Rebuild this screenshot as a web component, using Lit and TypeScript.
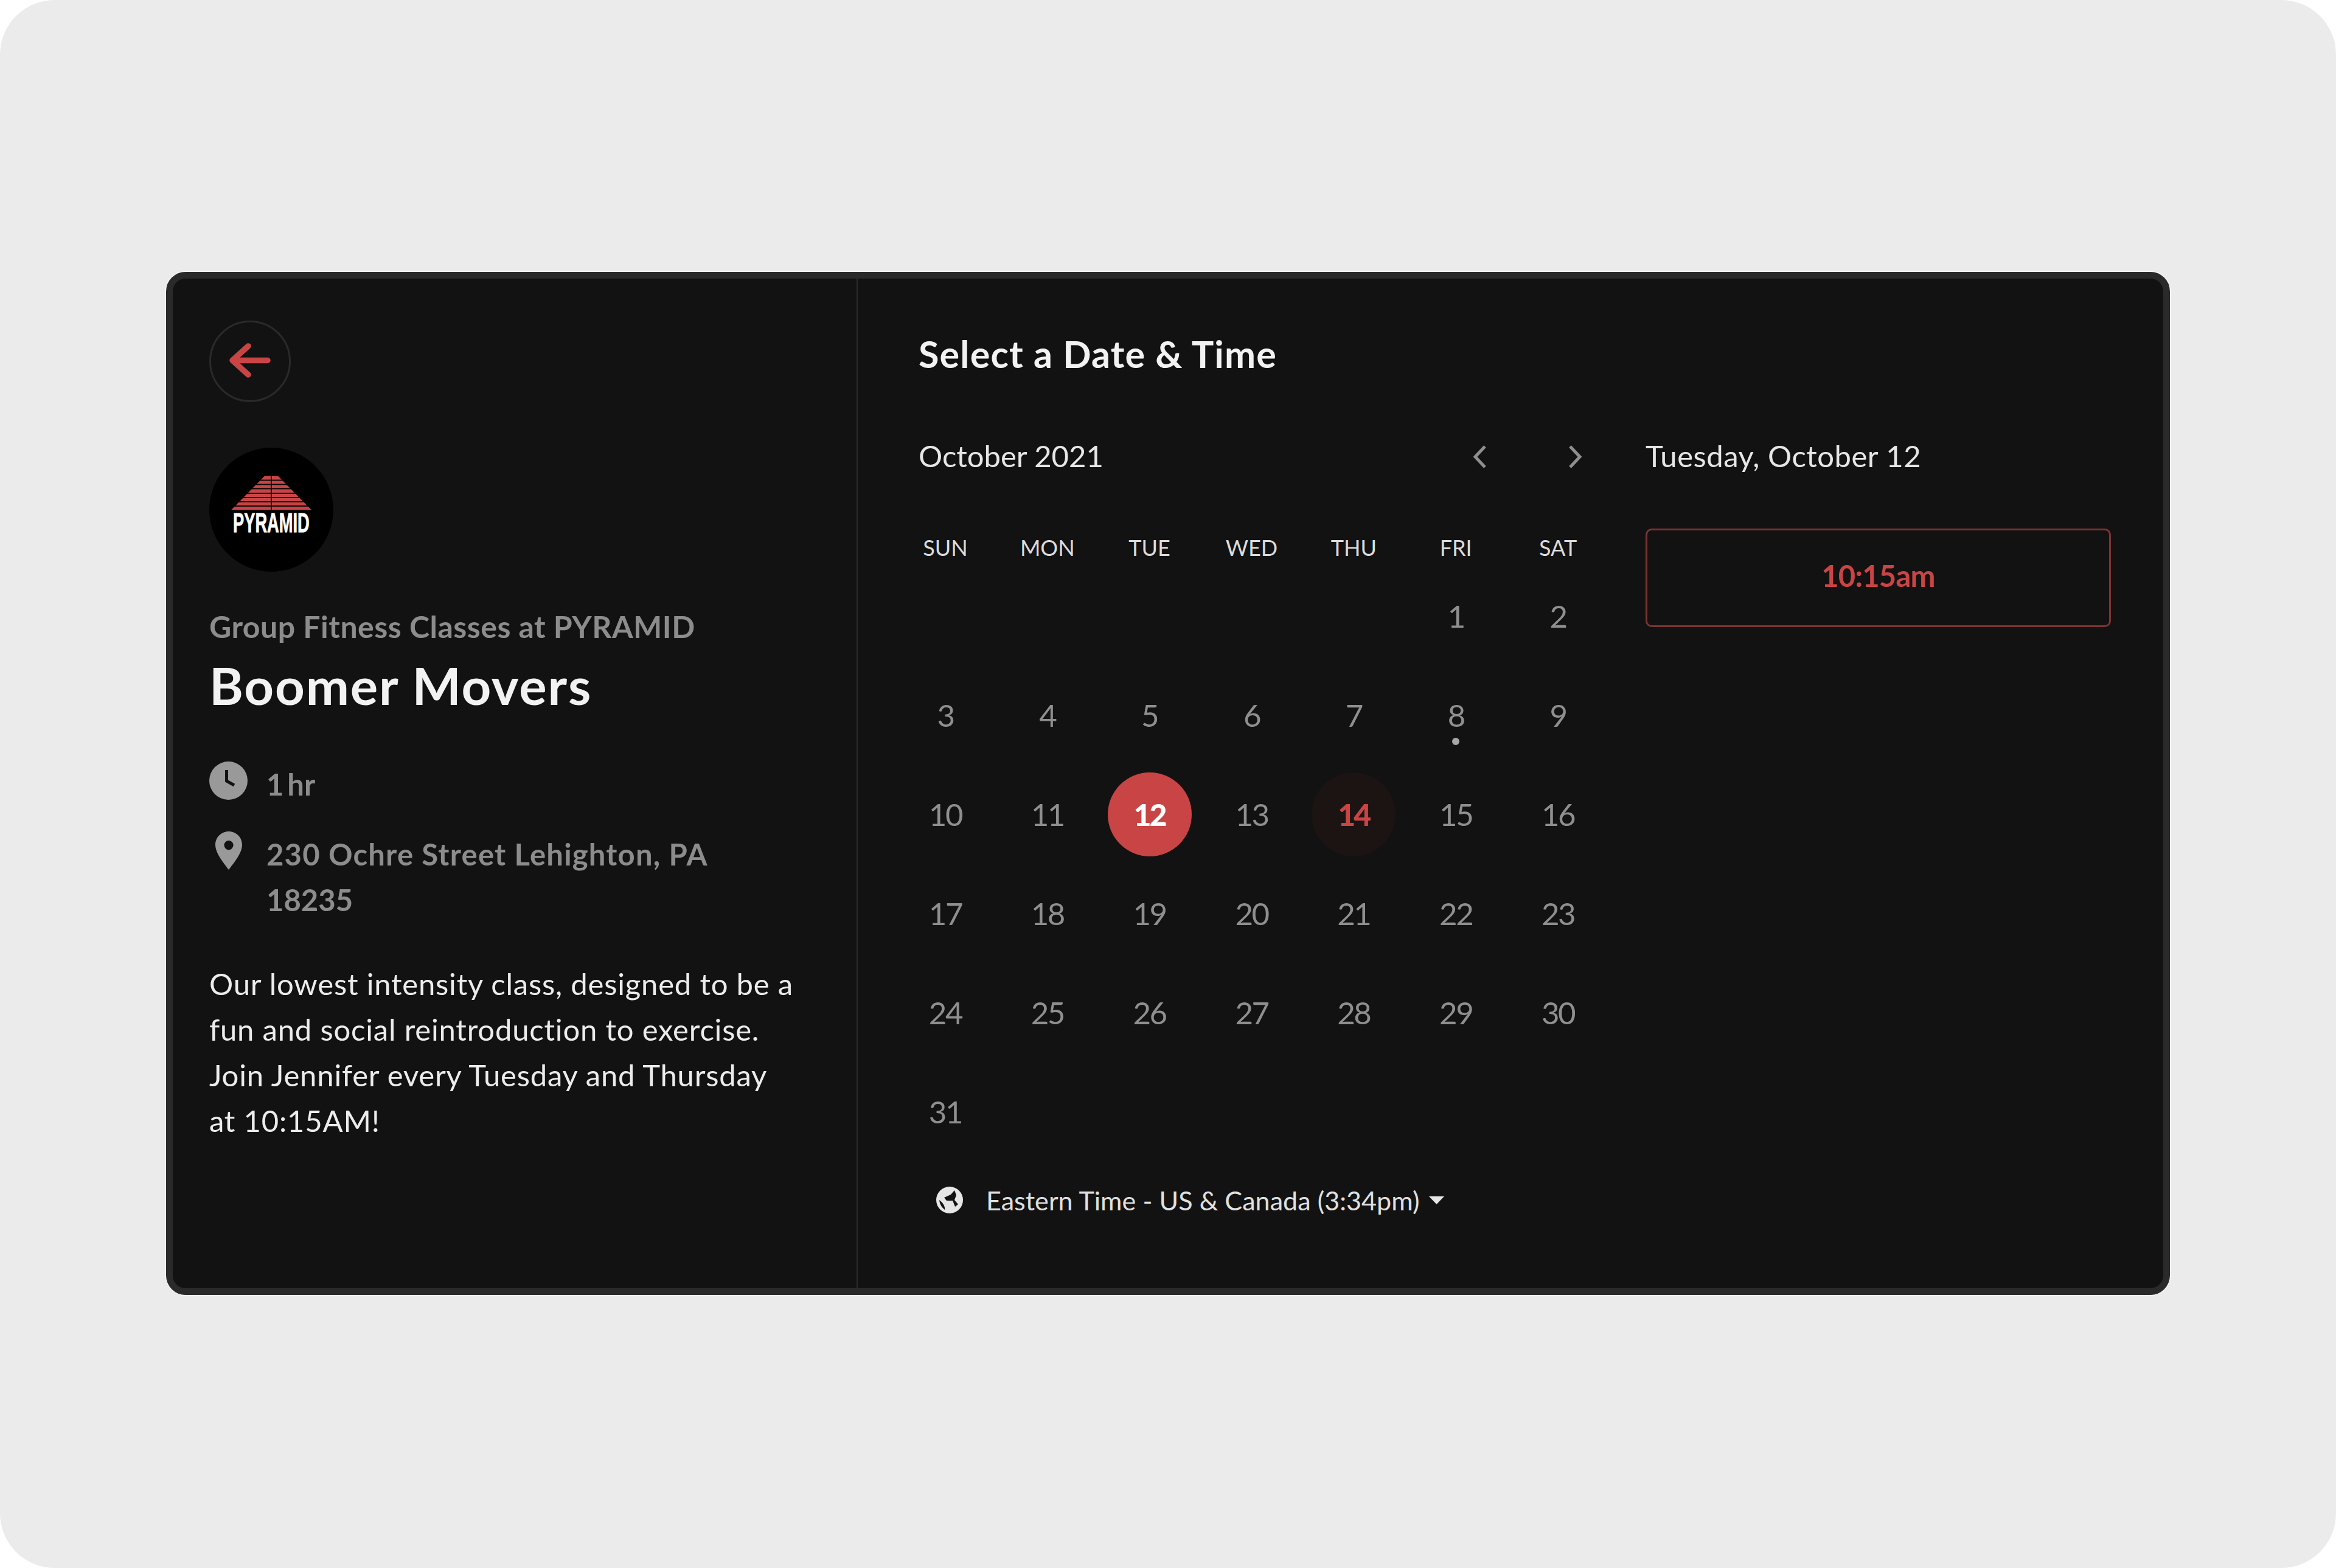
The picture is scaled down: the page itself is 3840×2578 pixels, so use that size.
import { LitElement, html, css, svg } from 'lit';
import { customElement } from 'lit/decorators.js';
import { classMap } from 'lit/directives/class-map.js';

const DAY_NAMES = ['SUN', 'MON', 'TUE', 'WED', 'THU', 'FRI', 'SAT'];
const FIRST_OFFSET = 5;
const DAYS_IN_MONTH = 31;

// gaps between the stripes of the logo
const STRIPE_GAPS = [53.5, 60.5, 67.5, 75, 82, 89, 96];

@customElement('app-root')
export class AppRoot extends LitElement {
  static styles = css`
    :host {
      display: block;
      background: #fff;
      font-family: Lato, 'Open Sans', sans-serif;
    }

    .page {
      height: 2578px;
      box-sizing: border-box;
      padding-top: 447px;
      background: #ebebeb;
      border-radius: 90px;
    }

    .card {
      display: flex;
      box-sizing: border-box;
      width: 3294px;
      height: 1682px;
      margin: 0 auto;
      background: #121212;
      border: 11px solid #2a2a2a;
      border-radius: 32px;
      box-shadow: 0 0 0 1px #fff;
    }

    .info {
      box-sizing: border-box;
      width: 1126px;
      padding: 69px 0 0 60px;
      border-right: 2px solid #2a2a2a;
    }

    .back {
      display: block;
      box-sizing: border-box;
      width: 134px;
      height: 134px;
      border: 3px solid #2a2a2a;
      border-radius: 50%;
    }

    .back svg {
      display: block;
      margin: -3px;
    }

    .logo {
      display: block;
      margin-top: 75px;
    }

    .org {
      margin-top: 60px;
      font-size: 50px;
      line-height: 60px;
      font-weight: 700;
      letter-spacing: 0.5px;
      color: #8c8c8c;
    }

    .name {
      margin: 16px 0 0;
      font-size: 85px;
      line-height: 100px;
      font-weight: 700;
      letter-spacing: 1.9px;
      color: #f2f2f2;
    }

    .meta {
      display: flex;
      align-items: flex-start;
      font-size: 49px;
      line-height: 75px;
      font-weight: 700;
      color: #8c8c8c;
    }

    .meta-time {
      margin-top: 76px;
      word-spacing: -6px;
    }

    .meta-place {
      margin-top: 40px;
    }

    .meta-icon {
      flex: none;
      width: 63px;
      margin-right: 31px;
      display: flex;
      justify-content: center;
    }

    .street {
      letter-spacing: 1.2px;
    }

    .desc {
      margin: 63px 0 0;
      font-size: 49px;
      line-height: 75px;
      letter-spacing: 0.8px;
      color: #ececec;
    }

    .picker {
      flex: 1;
      box-sizing: border-box;
      padding: 84px 0 0 60px;
    }

    .title {
      margin: 0;
      padding-left: 40px;
      font-size: 61px;
      line-height: 80px;
      font-weight: 700;
      letter-spacing: 1.2px;
      color: #f2f2f2;
    }

    .columns {
      display: flex;
      gap: 60px;
      margin-top: 87px;
    }

    .calendar {
      width: 1175px;
    }

    .month-row {
      display: flex;
      align-items: center;
      height: 80px;
      padding-left: 40px;
      font-size: 49px;
      color: #e6e6e6;
    }

    .month {
      flex: 1;
    }

    .nav {
      display: flex;
      justify-content: center;
      width: 112px;
      padding-top: 4px;
    }

    .nav + .nav {
      margin-left: 45px;
    }

    .weekdays,
    .days {
      display: grid;
      grid-template-columns: repeat(7, 1fr);
    }

    .weekdays {
      margin-top: 86px;
      font-size: 36px;
      line-height: 50px;
      text-align: center;
      color: #dcdcdc;
    }

    .days {
      grid-auto-rows: 163px;
      margin-top: 6px;
    }

    .cell {
      position: relative;
      display: flex;
      align-items: center;
      justify-content: center;
    }

    .num {
      display: flex;
      align-items: center;
      justify-content: center;
      width: 138px;
      height: 138px;
      border-radius: 50%;
      font-size: 51px;
      font-weight: 400;
      letter-spacing: -2.5px;
      color: #8f8f8f;
    }

    .num.selected {
      background: #c94545;
      color: #fff;
      font-weight: 900;
      font-size: 50px;
      letter-spacing: -3px;
    }

    .num.available {
      background: #1c1412;
      color: #c94545;
      font-weight: 900;
      font-size: 50px;
      letter-spacing: -3px;
    }

    .dot {
      position: absolute;
      left: 50%;
      top: 119px;
      width: 12px;
      height: 12px;
      margin-left: -6px;
      border-radius: 50%;
      background: #a8a8a8;
    }

    .zone {
      display: flex;
      align-items: center;
      height: 60px;
      margin-top: 34px;
      padding-left: 69px;
      font-size: 43px;
      letter-spacing: 0.06px;
      color: #e0e0e0;
    }

    .zone-label {
      margin: 0 16px 0 38px;
    }

    .times {
      width: 765px;
    }

    .date {
      height: 80px;
      font-size: 49px;
      line-height: 80px;
      letter-spacing: 0.5px;
      color: #e6e6e6;
    }

    .slot {
      display: flex;
      align-items: center;
      justify-content: center;
      box-sizing: border-box;
      height: 162px;
      margin-top: 80px;
      padding-bottom: 8px;
      border: 3px solid #7c3333;
      border-radius: 10px;
      font-size: 49px;
      font-weight: 700;
      letter-spacing: -0.8px;
      color: #c94545;
    }

    svg {
      display: block;
    }
  `;

  renderLogo() {
    return svg`
      <svg class="logo" width="204" height="204" viewBox="0 0 204 204">
        <circle cx="102" cy="102" r="102" fill="#000" />
        <polygon points="91,46.5 113,46.5 168,102.5 36,102.5" fill="#c94545" />
        ${STRIPE_GAPS.map(y => svg`<rect x="30" y=${y - 0.9} width="144" height="1.8" fill="#000" />`)}
        <rect x="101" y="44" width="2" height="59" fill="#000" />
        <text transform="translate(39 138.5) scale(0.62 1)" font-family="'Liberation Sans', sans-serif" font-weight="700" font-size="44" fill="#fff" stroke="#fff" stroke-width="0.8">PYRAMID</text>
      </svg>
    `;
  }

  renderDays() {
    const cells = [];
    for (let i = 0; i < FIRST_OFFSET; i++) {
      cells.push(html`<div class="cell"></div>`);
    }
    for (let d = 1; d <= DAYS_IN_MONTH; d++) {
      const classes = { num: true, selected: d === 12, available: d === 14 };
      cells.push(html`
        <div class="cell">
          <span class=${classMap(classes)}>${d}</span>
          ${d === 8 ? html`<span class="dot"></span>` : ''}
        </div>
      `);
    }
    return cells;
  }

  render() {
    return html`
      <div class="page">
        <div class="card">
          <section class="info">
            <div class="back">
              <svg width="134" height="134" viewBox="0 0 134 134" fill="none" stroke="#c94545" stroke-width="9.5" stroke-linecap="round" stroke-linejoin="round">
                <path d="M96 65.5H39M64 42L38 65.5L64 89" />
              </svg>
            </div>
            ${this.renderLogo()}
            <div class="org">Group Fitness Classes at PYRAMID</div>
            <h1 class="name">Boomer Movers</h1>
            <div class="meta meta-time">
              <span class="meta-icon">
                <svg width="63" height="63" viewBox="0 0 63 63">
                  <circle cx="31.5" cy="31.5" r="31.5" fill="#999" />
                  <path d="M28.5 14V32L41 39" fill="none" stroke="#121212" stroke-width="5" />
                </svg>
              </span>
              <span>1 hr</span>
            </div>
            <div class="meta meta-place">
              <span class="meta-icon">
                <svg width="44" height="63" viewBox="0 0 44 63">
                  <path fill="#999" fill-rule="evenodd" d="M22 0C10 0 0 9.5 0 22C0 36 14 52 22 63C30 52 44 36 44 22C44 9.5 34 0 22 0ZM22 15A7.6 7.6 0 1 1 22 30.2A7.6 7.6 0 1 1 22 15Z" />
                </svg>
              </span>
              <span><span class="street">230 Ochre Street Lehighton, PA</span><br />18235</span>
            </div>
            <p class="desc">
              Our lowest intensity class, designed to be a<br />
              fun and social reintroduction to exercise.<br />
              Join Jennifer every Tuesday and Thursday<br />
              at 10:15AM!
            </p>
          </section>
          <section class="picker">
            <h2 class="title">Select a Date &amp; Time</h2>
            <div class="columns">
              <div class="calendar">
                <div class="month-row">
                  <span class="month">October 2021</span>
                  <span class="nav">
                    <svg width="23" height="38" viewBox="0 0 23 38" fill="none" stroke="#8f8f8f" stroke-width="5"><path d="M20 2L4 19L20 36" /></svg>
                  </span>
                  <span class="nav">
                    <svg width="23" height="38" viewBox="0 0 23 38" fill="none" stroke="#8f8f8f" stroke-width="5"><path d="M3 2L19 19L3 36" /></svg>
                  </span>
                </div>
                <div class="weekdays">
                  ${DAY_NAMES.map(n => html`<span>${n}</span>`)}
                </div>
                <div class="days">${this.renderDays()}</div>
                <div class="zone">
                  <svg width="44" height="44" viewBox="0 0 44 44">
                    <circle cx="22" cy="22" r="22" fill="#e6e6e6" />
                    <path fill="#121212" d="M30 6L24 13L13 18L17 23L27 23L31 33L36 29L30 22L33 14Z" />
                    <path fill="#121212" d="M5 22C6 30 10 35 14 38C15 33 11 26 5 22Z" />
                  </svg>
                  <span class="zone-label">Eastern Time - US &amp; Canada (3:34pm)</span>
                  <svg width="25" height="13" viewBox="0 0 25 13"><path fill="#e6e6e6" d="M0 0H25L12.5 13Z" /></svg>
                </div>
              </div>
              <div class="times">
                <div class="date">Tuesday, October 12</div>
                <div class="slot">10:15am</div>
              </div>
            </div>
          </section>
        </div>
      </div>
    `;
  }
}
